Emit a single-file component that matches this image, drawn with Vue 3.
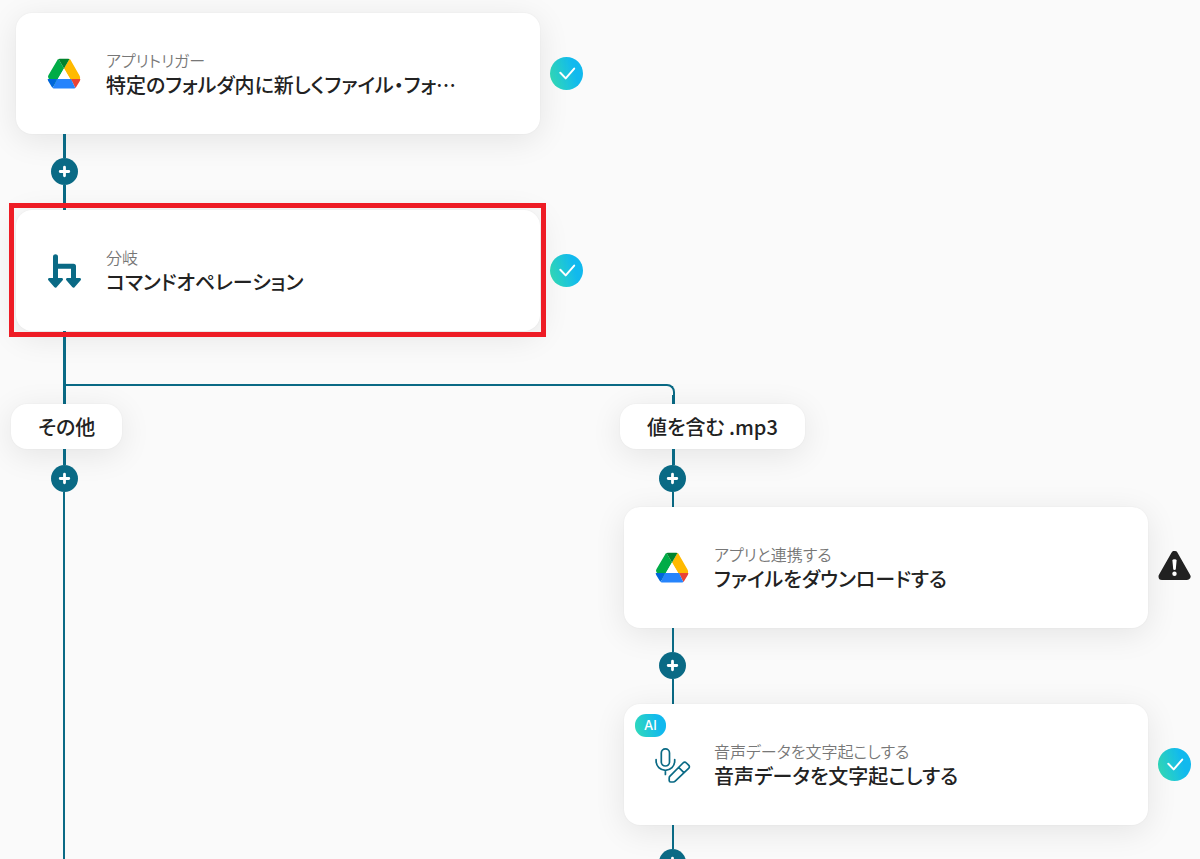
<script setup>
import { h } from 'vue'

const trunk = [
  { icon: 'drive', kind: 'アプリトリガー', title: '特定のフォルダ内に新しくファイル・フォ…', status: 'ok' },
  { icon: 'branch', kind: '分岐', title: 'コマンドオペレーション', status: 'ok', selected: true },
]

const lane = [
  { icon: 'drive', kind: 'アプリと連携する', title: 'ファイルをダウンロードする', status: 'warn' },
  { icon: 'voice', kind: '音声データを文字起こしする', title: '音声データを文字起こしする', status: 'ok', ai: true },
]

const shapes = {
  drive: [
    ['path', { d: 'M11.5 2 17 11.5 6.5 29.5 1.4 21Q.6 19.6 1.4 18.2L10.4 2.9Q10.8 2.2 11.5 2Z', fill: '#00ac47' }],
    ['path', { d: 'M22.5 2 17 11.5 24.2 24 33 22Q33.4 20.2 32.6 18.8L23.6 3Q23.2 2.2 22.5 2Z', fill: '#ffba00' }],
    ['path', { d: 'M11.5 2Q12 1.7 13 1.7H21Q22 1.7 22.5 2L17 11.5Z', fill: '#00832d' }],
    ['path', { d: 'M.7 22H10L5.7 30.8Q5 30.4 4.5 29.5L1.2 23.9Q.7 23 .7 22Z', fill: '#0066da' }],
    ['path', { d: 'M24 22H33.3Q33.3 23 32.8 23.9L29.5 29.5Q29 30.4 28.3 30.9Z', fill: '#ea4335' }],
    ['path', { d: 'M10 22H24L28.3 30.9Q27.4 31.5 26.4 31.5H7.6Q6.6 31.5 5.7 30.9Z', fill: '#2684fc' }],
    ['path', { d: 'M17 11.5 23.2 22H10.8Z', fill: '#fff' }],
  ],
  branch: [
    ['path', { d: 'M8.5 2.7V28M8.5 12.3H26.5V28', fill: 'none', stroke: '#0a6a85', 'stroke-width': 5, 'stroke-linecap': 'round', 'stroke-linejoin': 'round' }],
    ['path', { d: 'M2.4 25.4H14.6L8.5 32.2ZM20.4 25.4H32.6L26.5 32.2Z', fill: '#0a6a85', stroke: '#0a6a85', 'stroke-width': 2.8, 'stroke-linejoin': 'round' }],
  ],
  voice: [
    ['g', { fill: 'none', stroke: '#0a6a85', 'stroke-width': 1.7, 'stroke-linecap': 'round', 'stroke-linejoin': 'round' }, [
      h('rect', { x: 6.3, y: 0.8, width: 8.2, height: 17.2, rx: 4.1 }),
      h('path', { d: 'M1.1 11.5V13A9.3 9.3 0 0 0 19.7 13V11.5M10.4 22.4V26.4' }),
      h('path', { d: 'M28 15 15 28.2Q14.2 29 14.2 30V32.6Q14.2 34 15.6 34H18.2Q19.4 34 20.2 33.2L33.6 20.4Q35.2 18.8 33.6 17.2L31.4 15Q29.7 13.4 28 15ZM23.6 19.4 28.9 24.7' }),
    ]],
  ],
}

const StepIcon = (props) =>
  h('svg', { viewBox: '0 0 34 34', width: 34, height: 34, overflow: 'visible', 'aria-hidden': 'true' },
    shapes[props.name].map(([tag, attrs, kids]) => h(tag, attrs, kids)))
StepIcon.props = ['name']

const StatusIcon = (props) =>
  props.name === 'ok'
    ? h('svg', { viewBox: '0 0 33 33', width: 33, height: 33, role: 'img', 'aria-label': 'OK' }, [
        h('defs', [
          h('linearGradient', { id: 'ok-fill', x1: 0, y1: 0.65, x2: 1, y2: 0.35 }, [
            h('stop', { offset: 0, 'stop-color': '#32dbb8' }),
            h('stop', { offset: 0.75, 'stop-color': '#11b9ee' }),
          ]),
        ]),
        h('circle', { cx: 16.5, cy: 16.5, r: 16.5, fill: 'url(#ok-fill)' }),
        h('path', { d: 'M10.3 15.8 15.7 21.4 24.2 11.6', fill: 'none', stroke: '#fff', 'stroke-width': 2, 'stroke-linecap': 'round', 'stroke-linejoin': 'round' }),
      ])
    : h('svg', { viewBox: '0 0 33 33', width: 33, height: 33, role: 'img', 'aria-label': '!' }, [
        h('path', { d: 'M16.5 3.4 29 25.4H4Z', fill: '#222', stroke: '#222', 'stroke-width': 7, 'stroke-linejoin': 'round' }),
        h('path', { d: 'M14.4 9.6Q14.4 8.2 16.5 8.2T18.6 9.6L17.8 18Q17.7 18.9 16.5 18.9T15.2 18Z', fill: '#fff' }),
        h('circle', { cx: 16.5, cy: 22.7, r: 2.2, fill: '#fff' }),
      ])
StatusIcon.props = ['name']

const PlusButton = () =>
  h('button', { type: 'button', class: 'plus', 'aria-label': '+' }, [
    h('svg', { viewBox: '0 0 27 27', width: 27, height: 27, 'aria-hidden': 'true' }, [
      h('path', { d: 'M13.5 9.2V17.8M9.2 13.5H17.8', fill: 'none', stroke: '#fff', 'stroke-width': 2.8, 'stroke-linecap': 'round' }),
    ]),
  ])
</script>

<template>
  <main class="canvas" lang="ja">
    <section class="trunk">
      <template v-for="(step, i) in trunk" :key="step.title">
        <div v-if="i" class="link">
          <i class="line thick"></i><PlusButton /><i class="line thick"></i>
        </div>
        <div class="step">
          <article class="card" :class="{ selected: step.selected }">
            <StepIcon :name="step.icon" />
            <div class="words">
              <p class="kind">{{ step.kind }}</p>
              <h2 class="title">{{ step.title }}</h2>
            </div>
          </article>
          <StatusIcon :name="step.status" />
        </div>
      </template>
    </section>

    <section class="lanes">
      <div class="lane">
        <i class="line thick stem"></i>
        <i class="elbow"></i>
        <span class="pill">その他</span>
        <i class="line thick gap"></i>
        <PlusButton />
        <i class="line grow"></i>
      </div>

      <div class="lane lane-match">
        <i class="line thick drop"></i>
        <span class="pill">値を含む .mp3</span>
        <i class="line thick gap"></i>
        <PlusButton />
        <i class="line gap-end"></i>
        <template v-for="step in lane" :key="step.kind">
          <div class="step">
            <article class="card">
              <span v-if="step.ai" class="ai">AI</span>
              <StepIcon :name="step.icon" />
              <div class="words">
                <p class="kind">{{ step.kind }}</p>
                <h2 class="title">{{ step.title }}</h2>
              </div>
            </article>
            <StatusIcon :name="step.status" />
          </div>
          <div class="link">
            <i class="line"></i><PlusButton /><i class="line"></i>
          </div>
        </template>
      </div>
    </section>
  </main>
</template>

<style>
body {
  background: #fafafa;
}
</style>

<style scoped>
.canvas {
  box-sizing: border-box;
  display: flex;
  flex-direction: column;
  height: 100vh;
  overflow: hidden;
  padding: 13px 0 0 16px;
  background: #fafafa;
  color: #222;
  font-family: "Noto Sans CJK JP", sans-serif;
  font-feature-settings: "palt";
}
.trunk {
  flex: none;
}
.step {
  display: flex;
  align-items: center;
  gap: 10px;
}
.card {
  position: relative;
  box-sizing: border-box;
  display: flex;
  align-items: center;
  gap: 25px;
  width: 524px;
  height: 121px;
  padding: 0 31px;
  border-radius: 16px;
  background: #fff;
  box-shadow: 0 0 2px rgba(0, 0, 0, 0.05), 0 6px 32px rgba(0, 0, 0, 0.09);
}
.card > svg,
.step > svg {
  flex: none;
}
.selected::after {
  content: "";
  position: absolute;
  z-index: 2;
  inset: -7px -6px -6px -7px;
  border: 5px solid #ee1c25;
  pointer-events: none;
}
.words {
  padding-bottom: 4px;
}
.kind,
.title {
  margin: 0;
  white-space: nowrap;
}
.kind {
  color: #777;
  font-size: 16px;
  font-weight: 350;
  line-height: 26px;
}
.title {
  font-size: 20px;
  font-weight: 500;
  line-height: 24px;
}
.ai {
  position: absolute;
  top: 10px;
  left: 11px;
  width: 31px;
  border-radius: 11px;
  background: linear-gradient(75deg, #32dbb8, #11b9ee 75%);
  color: #fff;
  font-family: Inter, sans-serif;
  font-size: 13px;
  font-weight: 500;
  line-height: 23px;
  text-align: center;
}
.link {
  display: flex;
  flex-direction: column;
  height: 76px;
}
.link .line {
  flex: 1;
}
.link .line:first-child {
  flex: none;
  height: 24px;
}
.line {
  position: relative;
  display: block;
  flex: none;
  width: 2px;
  margin-left: 47px;
  background: #0a6a85;
}
.lane-match .line {
  margin-left: 48px;
}
.line.thick {
  width: 3px;
}
:deep(.plus),
.plus {
  position: relative;
  flex: none;
  display: block;
  width: 27px;
  height: 27px;
  margin-left: 35px;
  padding: 0;
  border: 0;
  border-radius: 50%;
  background: #0a6a85;
}
.lanes {
  flex: 1;
  display: grid;
  grid-template-columns: 608px auto;
  min-height: 0;
}
.lane {
  position: relative;
  display: flex;
  flex-direction: column;
}
.stem {
  height: 73px;
}
.drop {
  height: 9px;
  margin-top: 64px;
}
.elbow {
  position: absolute;
  top: 53px;
  left: 50px;
  box-sizing: border-box;
  width: 609px;
  height: 12px;
  border: solid #0a6a85;
  border-width: 2px 2px 0 0;
  border-radius: 0 8px 0 0;
}
.pill {
  position: relative;
  align-self: flex-start;
  margin-left: -5px;
  padding: 0 27px;
  border-radius: 16px;
  background: #fff;
  box-shadow: 0 0 2px rgba(0, 0, 0, 0.05), 0 6px 32px rgba(0, 0, 0, 0.09);
  font-size: 20px;
  font-weight: 500;
  line-height: 45px;
  white-space: nowrap;
}
.lane-match .pill {
  margin-left: -4px;
}
.gap {
  height: 16px;
}
.gap-end {
  height: 15px;
}
.grow {
  flex: 1;
}
</style>
